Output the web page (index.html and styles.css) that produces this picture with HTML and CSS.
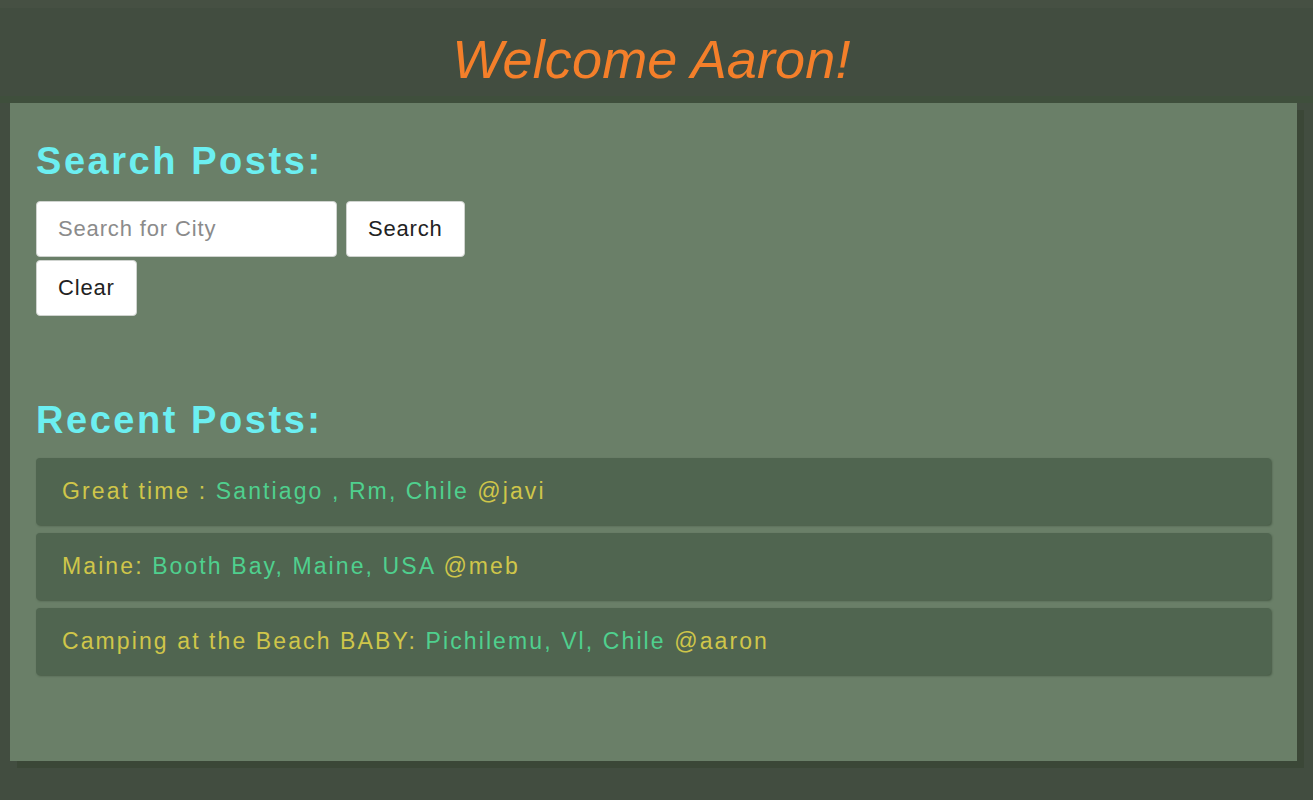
FILE: index.html
```html
<!DOCTYPE html>
<html>
<head>
<meta charset="utf-8">
<link rel="stylesheet" href="styles.css">
</head>
<body>
<div class="app">
  <header class="header">
    <h1 class="title">Welcome Aaron!</h1>
  </header>
  <main class="panel">
    <h2 class="section-title">Search Posts:</h2>
    <form class="search">
      <input class="search-input" type="text" placeholder="Search for City">
      <button class="btn" type="button">Search</button>
      <button class="btn" type="button">Clear</button>
    </form>
    <h2 class="section-title recent-title">Recent Posts:</h2>
    <ul class="posts">
      <li class="post"><span class="post-title">Great time : </span><span class="post-loc">Santiago , Rm, Chile</span> <span class="post-user">@javi</span></li>
      <li class="post"><span class="post-title">Maine: </span><span class="post-loc">Booth Bay, Maine, USA</span> <span class="post-user">@meb</span></li>
      <li class="post"><span class="post-title">Camping at the Beach BABY: </span><span class="post-loc">Pichilemu, Vl, Chile</span> <span class="post-user">@aaron</span></li>
    </ul>
  </main>
</div>
</body>
</html>
```
FILE: styles.css
```css
html {
  background: #465043;
}
body {
  margin: 0;
  padding: 8px 0 0 0;
  background: #465043;
  font-family: "Liberation Sans", Arial, sans-serif;
  height: 792px;
}
.app {
  background: #424d40;
  height: 792px;
}
.header {
  padding: 24px 10px 10px 0;
  border-bottom: 7px solid #3f4f3c;
  text-align: center;
}
.title {
  margin: 0;
  font-size: 54px;
  line-height: 54px;
  font-weight: 400;
  font-style: italic;
  color: #f47f2a;
  letter-spacing: 0.15px;
}
.panel {
  margin: 0 16px 0 10px;
  background: #6a7f68;
  padding: 39px 26px 86px;
  box-shadow: 7px 7px 0 #3b4737;
}
.section-title {
  margin: 0;
  font-size: 38px;
  line-height: 38px;
  font-weight: 700;
  color: #6ceff1;
  letter-spacing: 2.55px;
}
.search {
  margin-top: 21px;
  width: 440px;
  display: flex;
  flex-wrap: wrap;
  column-gap: 9px;
  row-gap: 3px;
}
.search-input {
  box-sizing: border-box;
  width: 301px;
  height: 56px;
  border: 1px solid #cfd3cf;
  border-radius: 4px;
  background: #fff;
  padding: 0 21px;
  font-family: "Liberation Sans", Arial, sans-serif;
  font-size: 22px;
  letter-spacing: 0.85px;
  color: #333;
}
.search-input::placeholder {
  color: #8b8b8b;
}
.btn {
  box-sizing: border-box;
  height: 56px;
  padding: 0 21px;
  border: 1px solid #cfd3cf;
  border-radius: 4px;
  background: #fff;
  font-family: "Liberation Sans", Arial, sans-serif;
  font-size: 22px;
  letter-spacing: 0.8px;
  color: #222;
}
.recent-title {
  margin-top: 85px;
}
.posts {
  list-style: none;
  margin: 19px 0 0;
  padding: 0;
  display: flex;
  flex-direction: column;
  gap: 8px;
}
.post {
  box-sizing: border-box;
  height: 67px;
  padding: 0 26px;
  line-height: 67px;
  white-space: nowrap;
  background: #506550;
  border-radius: 4px;
  box-shadow: 1px 1px 2px rgba(40, 55, 38, 0.5);
  font-size: 23px;
  letter-spacing: 2.1px;
}
.post-title,
.post-user {
  color: #cfc64a;
}
.post-loc {
  color: #4fd08e;
}
```
